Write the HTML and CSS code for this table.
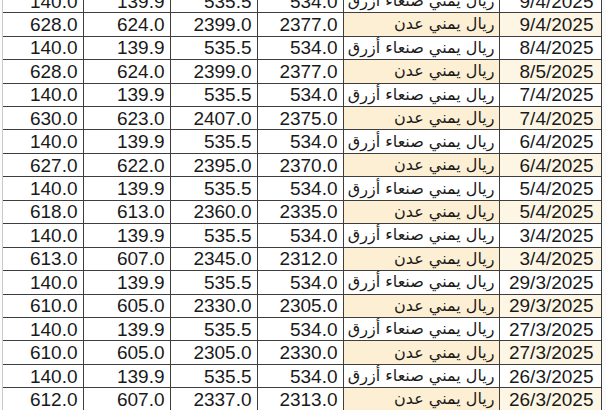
FILE: index.html
```html
<!DOCTYPE html>
<html lang="ar">
<head>
<meta charset="utf-8">
<title>أسعار الصرف</title>
<link rel="stylesheet" href="styles.css">
</head>
<body>
<div class="sheet">
  <div class="grid" id="grid">
    <div class="row"><div class="c n">140.0</div><div class="c n">139.9</div><div class="c n">535.5</div><div class="c n">534.0</div><div class="c name">ريال يمني صنعاء أزرق</div><div class="c date">9/4/2025</div></div>
    <div class="row aden"><div class="c n">628.0</div><div class="c n">624.0</div><div class="c n">2399.0</div><div class="c n">2377.0</div><div class="c name">ريال يمني عدن</div><div class="c date">9/4/2025</div></div>
    <div class="row"><div class="c n">140.0</div><div class="c n">139.9</div><div class="c n">535.5</div><div class="c n">534.0</div><div class="c name">ريال يمني صنعاء أزرق</div><div class="c date">8/4/2025</div></div>
    <div class="row aden"><div class="c n">628.0</div><div class="c n">624.0</div><div class="c n">2399.0</div><div class="c n">2377.0</div><div class="c name">ريال يمني عدن</div><div class="c date">8/5/2025</div></div>
    <div class="row"><div class="c n">140.0</div><div class="c n">139.9</div><div class="c n">535.5</div><div class="c n">534.0</div><div class="c name">ريال يمني صنعاء أزرق</div><div class="c date">7/4/2025</div></div>
    <div class="row aden"><div class="c n">630.0</div><div class="c n">623.0</div><div class="c n">2407.0</div><div class="c n">2375.0</div><div class="c name">ريال يمني عدن</div><div class="c date">7/4/2025</div></div>
    <div class="row"><div class="c n">140.0</div><div class="c n">139.9</div><div class="c n">535.5</div><div class="c n">534.0</div><div class="c name">ريال يمني صنعاء أزرق</div><div class="c date">6/4/2025</div></div>
    <div class="row aden"><div class="c n">627.0</div><div class="c n">622.0</div><div class="c n">2395.0</div><div class="c n">2370.0</div><div class="c name">ريال يمني عدن</div><div class="c date">6/4/2025</div></div>
    <div class="row"><div class="c n">140.0</div><div class="c n">139.9</div><div class="c n">535.5</div><div class="c n">534.0</div><div class="c name">ريال يمني صنعاء أزرق</div><div class="c date">5/4/2025</div></div>
    <div class="row aden"><div class="c n">618.0</div><div class="c n">613.0</div><div class="c n">2360.0</div><div class="c n">2335.0</div><div class="c name">ريال يمني عدن</div><div class="c date">5/4/2025</div></div>
    <div class="row"><div class="c n">140.0</div><div class="c n">139.9</div><div class="c n">535.5</div><div class="c n">534.0</div><div class="c name">ريال يمني صنعاء أزرق</div><div class="c date">3/4/2025</div></div>
    <div class="row aden"><div class="c n">613.0</div><div class="c n">607.0</div><div class="c n">2345.0</div><div class="c n">2312.0</div><div class="c name">ريال يمني عدن</div><div class="c date">3/4/2025</div></div>
    <div class="row"><div class="c n">140.0</div><div class="c n">139.9</div><div class="c n">535.5</div><div class="c n">534.0</div><div class="c name">ريال يمني صنعاء أزرق</div><div class="c date">29/3/2025</div></div>
    <div class="row aden"><div class="c n">610.0</div><div class="c n">605.0</div><div class="c n">2330.0</div><div class="c n">2305.0</div><div class="c name">ريال يمني عدن</div><div class="c date">29/3/2025</div></div>
    <div class="row"><div class="c n">140.0</div><div class="c n">139.9</div><div class="c n">535.5</div><div class="c n">534.0</div><div class="c name">ريال يمني صنعاء أزرق</div><div class="c date">27/3/2025</div></div>
    <div class="row aden"><div class="c n">610.0</div><div class="c n">605.0</div><div class="c n">2305.0</div><div class="c n">2330.0</div><div class="c name">ريال يمني عدن</div><div class="c date">27/3/2025</div></div>
    <div class="row"><div class="c n">140.0</div><div class="c n">139.9</div><div class="c n">535.5</div><div class="c n">534.0</div><div class="c name">ريال يمني صنعاء أزرق</div><div class="c date">26/3/2025</div></div>
    <div class="row aden"><div class="c n">612.0</div><div class="c n">607.0</div><div class="c n">2337.0</div><div class="c n">2313.0</div><div class="c name">ريال يمني عدن</div><div class="c date">26/3/2025</div></div>
  </div>
</div>
</body>
</html>
```

FILE: styles.css
```css
html, body {
  margin: 0;
  padding: 0;
  background: #ffffff;
  overflow: hidden;
}

.sheet {
  width: 606px;
  height: 410px;
  overflow: hidden;
  background: #fbfbfb;
}

.grid {
  margin-top: -10.2px;
  margin-left: 2px;
  width: 599px;
  border-left: 1px solid #c8c8c8;
  background: #ffffff;
}

.row {
  display: grid;
  grid-template-columns: 80.5px 87px 87px 86px 156px 102px;
  height: 23.44px;
}

.c {
  box-sizing: border-box;
  border-right: 1.6px solid #3e3e3e;
  border-bottom: 1.6px solid #3e3e3e;
  display: flex;
  align-items: center;
  justify-content: flex-end;
  overflow: hidden;
  white-space: nowrap;
  font-family: "Liberation Sans", Arial, sans-serif;
  font-size: 19px;
  color: #1a1a1a;
  padding-right: 5px;
  line-height: 1;
}

.c.n:first-child {
  border-right-width: 1.8px;
}

.name {
  direction: rtl;
  justify-content: flex-start;
  font-family: "DejaVu Sans", sans-serif;
  font-size: 16px;
  padding-right: 4px;
  padding-left: 0;
}

.date {
  padding-right: 7px;
}

.aden .name {
  background: #fcefd4;
}

.aden .date {
  background: #fdf6e4;
}
```
